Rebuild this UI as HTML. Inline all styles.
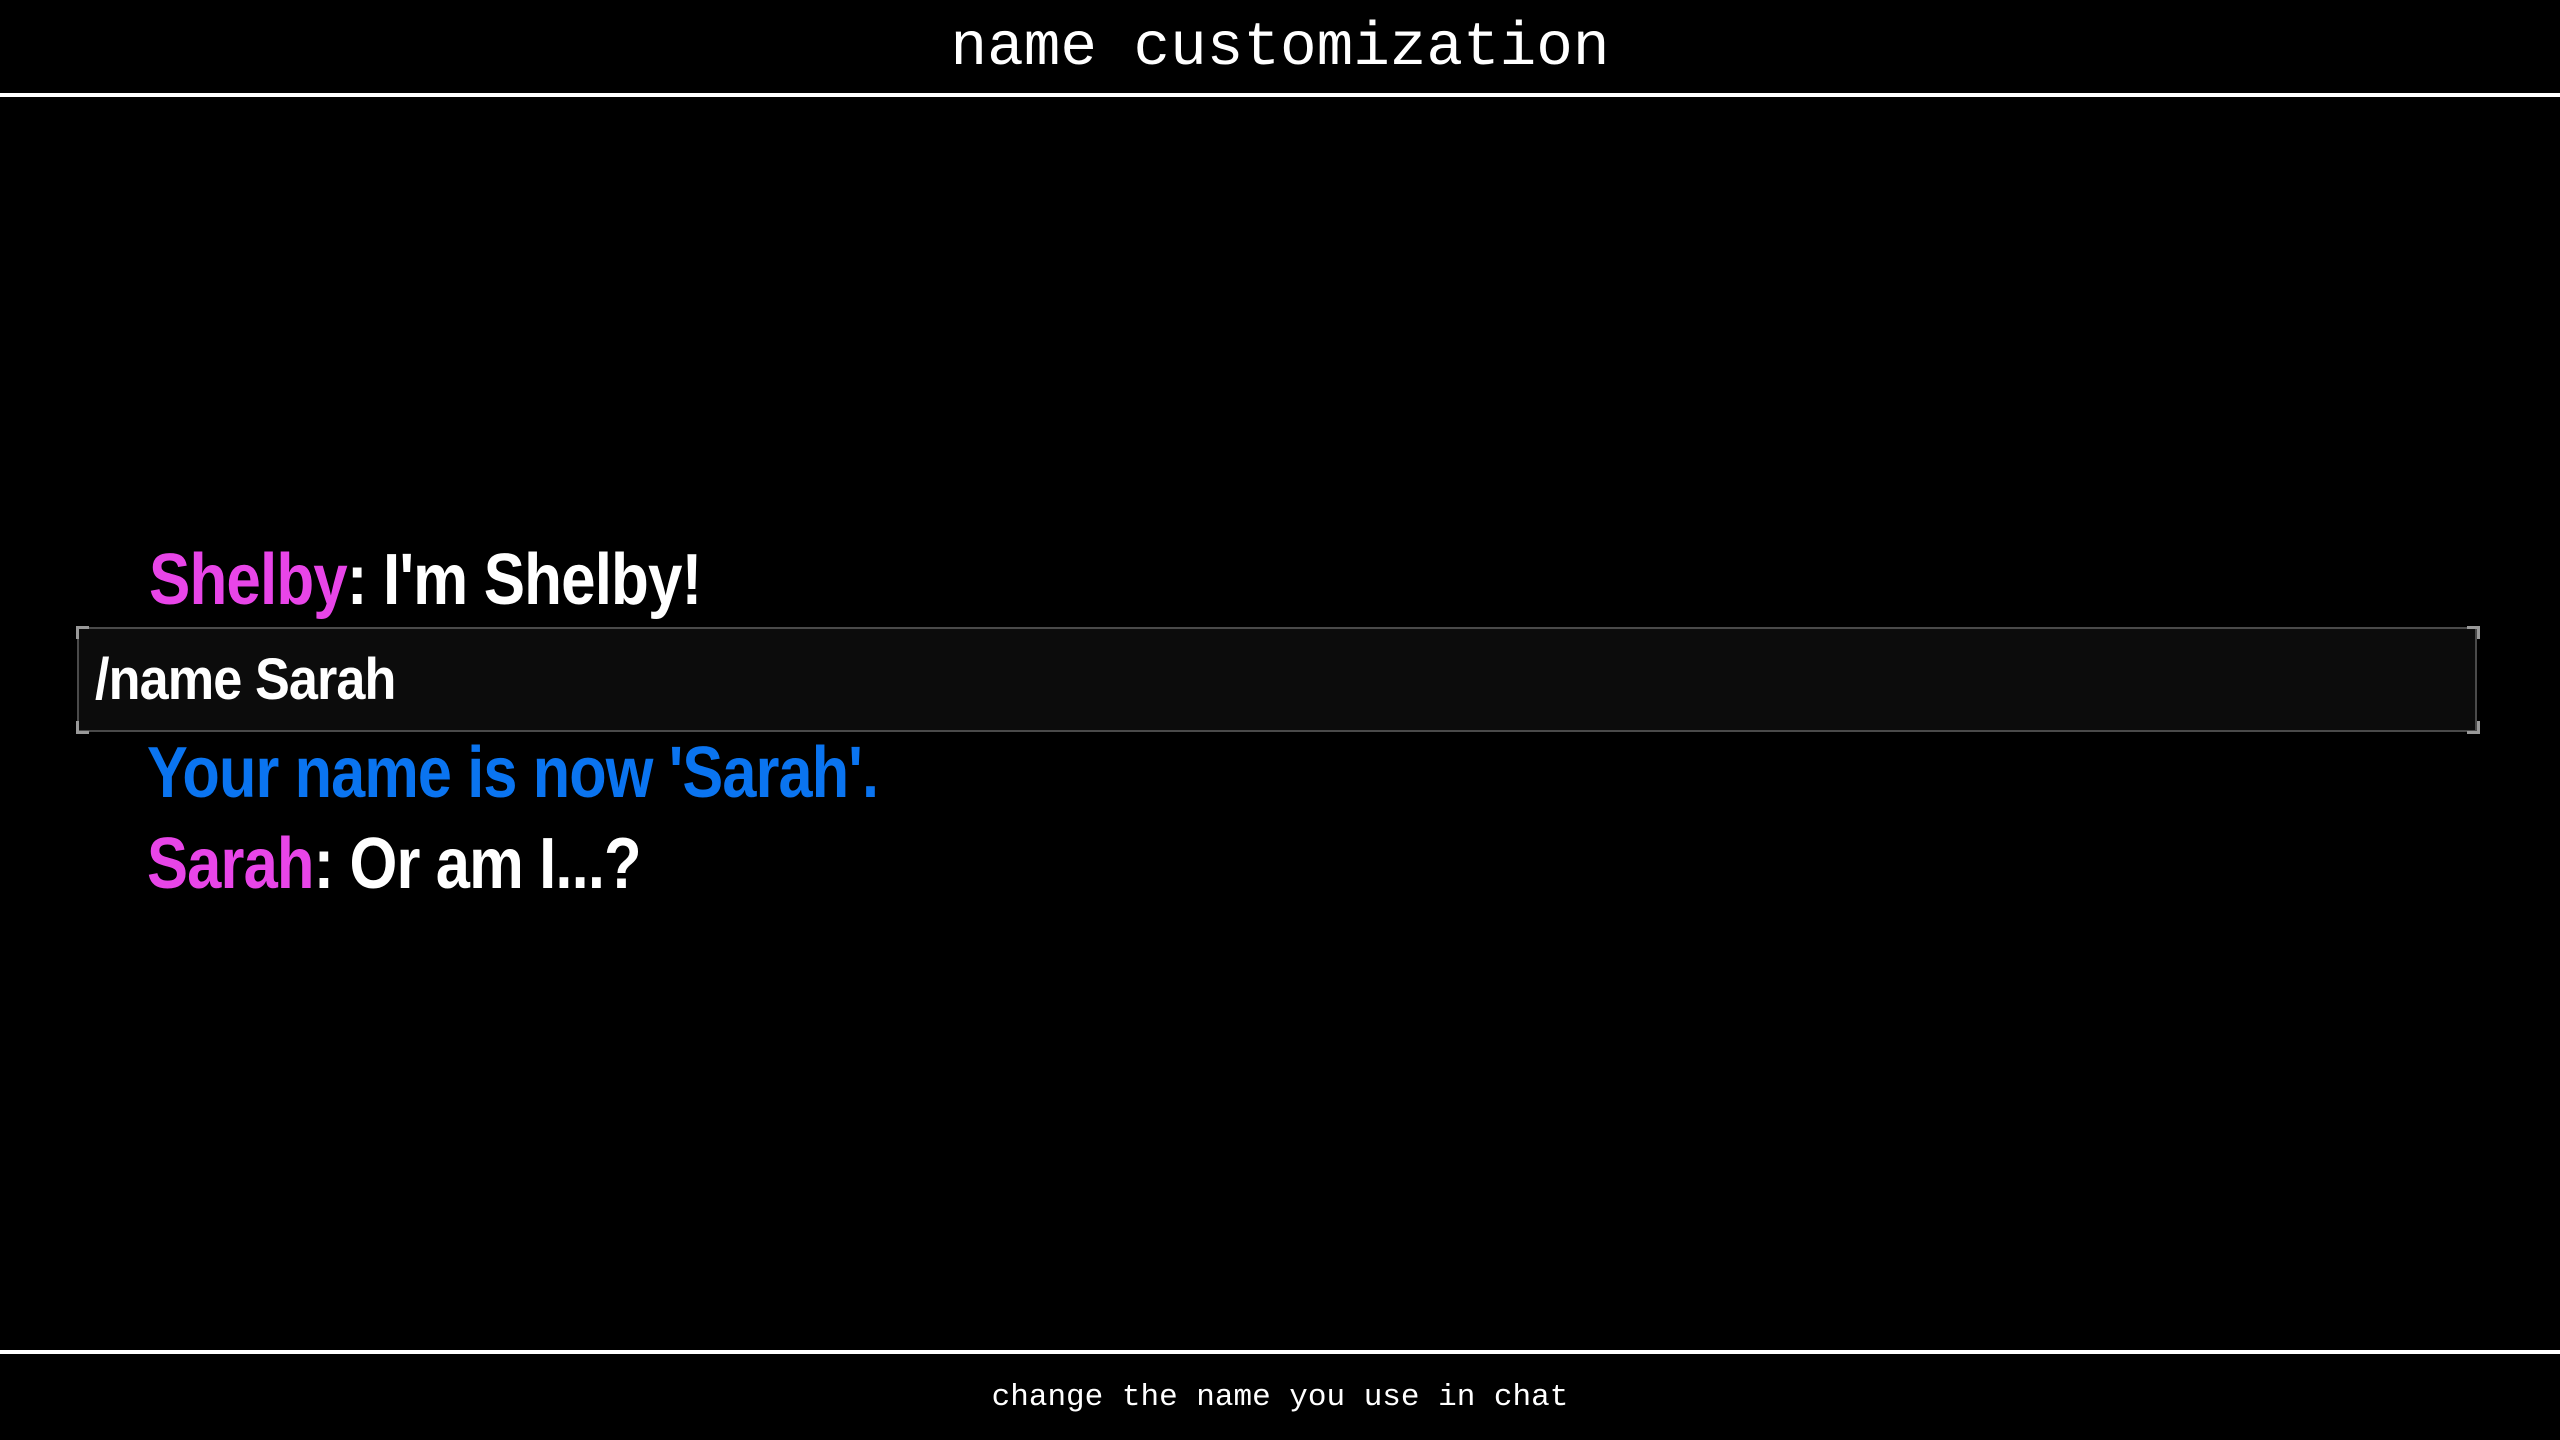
<!DOCTYPE html>
<html><head><meta charset="utf-8"><style>
html,body{margin:0;padding:0;background:#000;width:2560px;height:1440px;overflow:hidden;position:relative}
.t{position:absolute;white-space:nowrap;line-height:1}
.mono{font-family:"Liberation Mono",monospace;color:#fff}
.chat{font-family:"Liberation Sans",sans-serif;font-weight:bold;font-size:72px;color:#fff;transform:scaleX(0.85);transform-origin:left top;letter-spacing:-1px}
.m{color:#e845e8}
.line{position:absolute;left:0;width:2560px;height:4px;background:#fff}
.box{position:absolute;left:77px;top:627px;width:2396px;height:101px;border:2px solid #4a4a4a;background:#0c0c0c}
.c{position:absolute;width:10px;height:10px;border-color:#999;border-style:solid}
</style></head><body>
<div class="t mono" style="left:0;width:2560px;text-align:center;top:18px;font-size:61px">name customization</div>
<div class="line" style="top:93px"></div>

<div class="t chat" style="left:149px;top:544px;transform:scaleX(0.86)"><span class="m">Shelby</span>: I'm Shelby!</div>

<div class="box"></div>
<div class="c" style="left:76px;top:626px;border-width:3px 0 0 3px"></div>
<div class="c" style="left:2467px;top:626px;border-width:3px 3px 0 0"></div>
<div class="c" style="left:76px;top:721px;border-width:0 0 3px 3px"></div>
<div class="c" style="left:2467px;top:721px;border-width:0 3px 3px 0"></div>
<div class="t chat" style="left:95px;top:651px;font-size:58px;transform:scaleX(0.9)">/name Sarah</div>

<div class="t chat" style="left:147px;top:737px;color:#0a74f0">Your name is now 'Sarah'.</div>
<div class="t chat" style="left:147px;top:828px;transform:scaleX(0.854)"><span class="m">Sarah</span>: Or am I...?</div>

<div class="line" style="top:1350px"></div>
<div class="t mono" style="left:0;width:2560px;text-align:center;top:1382px;font-size:31px">change the name you use in chat</div>
</body></html>
